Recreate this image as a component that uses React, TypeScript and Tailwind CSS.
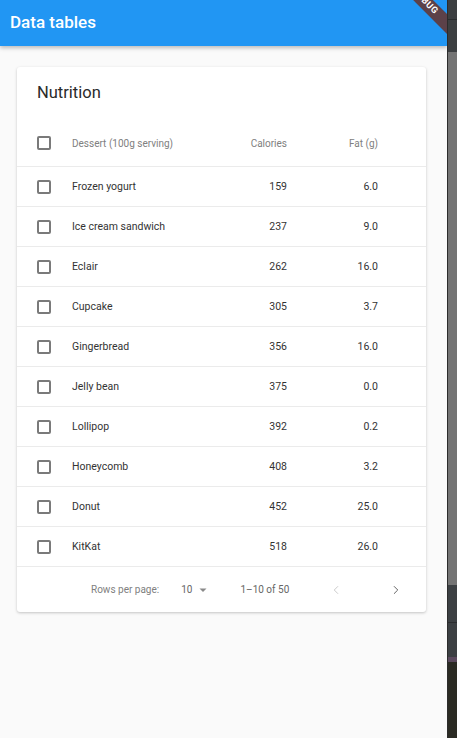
import { ChevronLeft, ChevronRight } from 'lucide-react'

type Dessert = {
  name: string
  calories: number
  fat: string
}

const DESSERTS: Dessert[] = [
  { name: 'Frozen yogurt', calories: 159, fat: '6.0' },
  { name: 'Ice cream sandwich', calories: 237, fat: '9.0' },
  { name: 'Eclair', calories: 262, fat: '16.0' },
  { name: 'Cupcake', calories: 305, fat: '3.7' },
  { name: 'Gingerbread', calories: 356, fat: '16.0' },
  { name: 'Jelly bean', calories: 375, fat: '0.0' },
  { name: 'Lollipop', calories: 392, fat: '0.2' },
  { name: 'Honeycomb', calories: 408, fat: '3.2' },
  { name: 'Donut', calories: 452, fat: '25.0' },
  { name: 'KitKat', calories: 518, fat: '26.0' },
]

function Checkbox() {
  return <div className="h-[14px] w-[14px] shrink-0 rounded-[2px] border-2 border-[#7a7a7a]" />
}

// flutter's debug ribbon, mostly cut off by the window edge
function DebugBanner() {
  return (
    <div className="pointer-events-none absolute left-[385px] top-[-5px] z-20 flex h-[14px] w-[80px] rotate-45 items-center justify-center bg-[#5c4149] text-[9px] font-bold tracking-[0.5px] text-white">
      DEBUG
    </div>
  )
}

function SideStrip() {
  return (
    <div className="flex w-[10px] shrink-0 flex-col border-l border-[#2c2c2c]">
      <div className="h-[19px] bg-[#3c3f41]" />
      <div className="h-px bg-[#2b2d2f]" />
      <div className="h-[32px] bg-[#3c3f41]" />
      <div className="h-[533px] bg-[#747474]" />
      <div className="h-[37px] bg-[#3c4043]" />
      <div className="h-px bg-[#2b2d2f]" />
      <div className="h-[34px] bg-[#3c4043]" />
      <div className="h-[5px] bg-[#5b4a5e]" />
      <div className="flex-1 bg-[#2b2b24]" />
    </div>
  )
}

export default function App() {
  return (
    <div
      className="flex h-[738px] w-[457px] overflow-hidden bg-[#fafafa]"
      style={{ fontFamily: 'Roboto, "Noto Sans", sans-serif' }}
    >
      <div className="relative flex w-[447px] shrink-0 flex-col overflow-hidden">
        <header className="z-10 flex h-[46px] shrink-0 items-center bg-[#2196f3] pl-[10px] shadow-[0_2px_4px_rgba(0,0,0,0.25)]">
          <h1 className="text-[17px] font-medium text-white">Data tables</h1>
        </header>
        <DebugBanner />

        <div className="ml-[17px] mt-[21px] w-[409px] rounded-[3px] bg-white shadow-[0_1px_3px_rgba(0,0,0,0.22)]">
          <div className="flex h-[53px] items-center pl-[20px] text-[16.5px] text-[#2a2a2a]">Nutrition</div>

          <div className="flex h-[46px] items-center text-[10px] text-[#808080]">
            <div className="pl-[20px]">
              <Checkbox />
            </div>
            <div className="w-[186px] pl-[21px]">Dessert (100g serving)</div>
            <div className="w-[50px] text-right">Calories</div>
            <div className="w-[91px] text-right">Fat (g)</div>
          </div>

          {DESSERTS.map((d) => (
            <div
              key={d.name}
              className="flex h-[40px] items-center border-t border-[#ebebeb] text-[10.5px] text-[#333333]"
            >
              <div className="pl-[20px]">
                <Checkbox />
              </div>
              <div className="w-[186px] pl-[21px]">{d.name}</div>
              <div className="w-[50px] text-right">{d.calories}</div>
              <div className="w-[91px] text-right">{d.fat}</div>
            </div>
          ))}

          <div className="flex h-[46px] items-center border-t border-[#ebebeb] text-[10px] text-[#808080]">
            <span className="ml-[74px]">Rows per page:</span>
            <span className="ml-[22px] text-[#666666]">10</span>
            <svg width="10" height="10" viewBox="0 0 10 10" className="ml-[6px]">
              <path d="M1.5 3.5 L8.5 3.5 L5 7 Z" fill="#8a8a8a" />
            </svg>
            <span className="ml-[32px] text-[#666666]">1–10 of 50</span>
            <ChevronLeft className="ml-[40px]" size={14} strokeWidth={1.5} color="#c4c4c4" />
            <ChevronRight className="ml-[46px]" size={14} strokeWidth={1.7} color="#616161" />
          </div>
        </div>
      </div>
      <SideStrip />
    </div>
  )
}
